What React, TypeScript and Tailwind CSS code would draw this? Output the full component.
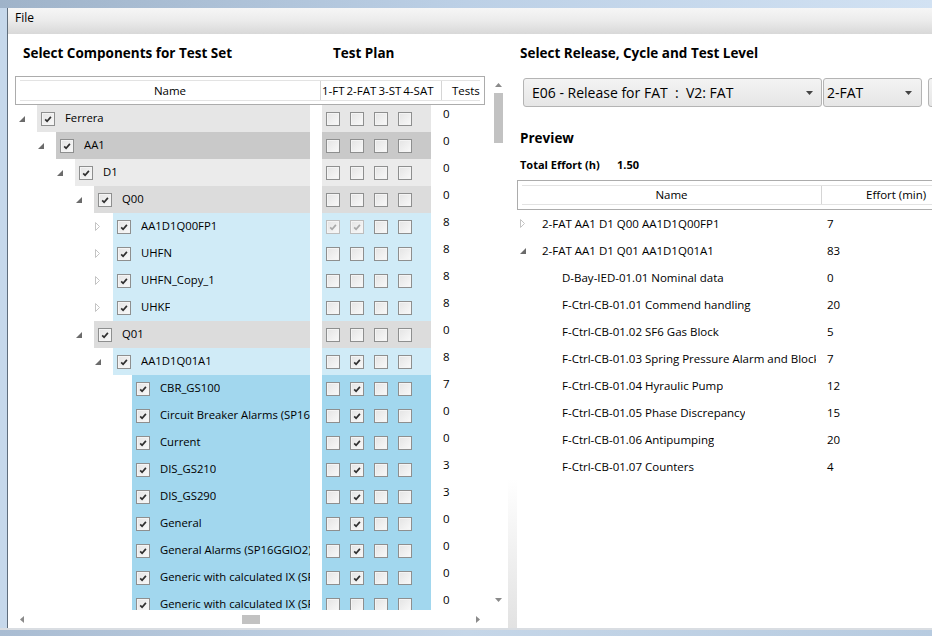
import React from 'react';

type Tone = 'root' | 'area' | 'bay' | 'ied' | 'dev' | 'fn';

const toneBg: Record<Tone, string> = {
  root: 'bg-[#e6e6e6]',
  area: 'bg-[#c9c9c9]',
  bay: 'bg-[#ebebeb]',
  ied: 'bg-[#dcdcdc]',
  dev: 'bg-[#d0ebf7]',
  fn: 'bg-[#a2d7ee]',
};

interface TreeRow {
  name: string;
  level: number;
  exp?: 'open' | 'closed';
  tone: Tone;
  plan: number[]; // 0 off, 1 on, 2 on + disabled
  tests: number;
}

const tree: TreeRow[] = [
  { name: 'Ferrera', level: 0, exp: 'open', tone: 'root', plan: [0, 0, 0, 0], tests: 0 },
  { name: 'AA1', level: 1, exp: 'open', tone: 'area', plan: [0, 0, 0, 0], tests: 0 },
  { name: 'D1', level: 2, exp: 'open', tone: 'bay', plan: [0, 0, 0, 0], tests: 0 },
  { name: 'Q00', level: 3, exp: 'open', tone: 'ied', plan: [0, 0, 0, 0], tests: 0 },
  { name: 'AA1D1Q00FP1', level: 4, exp: 'closed', tone: 'dev', plan: [2, 2, 0, 0], tests: 8 },
  { name: 'UHFN', level: 4, exp: 'closed', tone: 'dev', plan: [0, 0, 0, 0], tests: 8 },
  { name: 'UHFN_Copy_1', level: 4, exp: 'closed', tone: 'dev', plan: [0, 0, 0, 0], tests: 8 },
  { name: 'UHKF', level: 4, exp: 'closed', tone: 'dev', plan: [0, 0, 0, 0], tests: 8 },
  { name: 'Q01', level: 3, exp: 'open', tone: 'ied', plan: [0, 0, 0, 0], tests: 0 },
  { name: 'AA1D1Q01A1', level: 4, exp: 'open', tone: 'dev', plan: [0, 1, 0, 0], tests: 8 },
  { name: 'CBR_GS100', level: 5, tone: 'fn', plan: [0, 1, 0, 0], tests: 7 },
  { name: 'Circuit Breaker Alarms (SP16GGIO1)', level: 5, tone: 'fn', plan: [0, 1, 0, 0], tests: 0 },
  { name: 'Current', level: 5, tone: 'fn', plan: [0, 1, 0, 0], tests: 0 },
  { name: 'DIS_GS210', level: 5, tone: 'fn', plan: [0, 1, 0, 0], tests: 3 },
  { name: 'DIS_GS290', level: 5, tone: 'fn', plan: [0, 1, 0, 0], tests: 3 },
  { name: 'General', level: 5, tone: 'fn', plan: [0, 1, 0, 0], tests: 0 },
  { name: 'General Alarms (SP16GGIO2)', level: 5, tone: 'fn', plan: [0, 1, 0, 0], tests: 0 },
  { name: 'Generic with calculated IX (SP16GGIO3)', level: 5, tone: 'fn', plan: [0, 1, 0, 0], tests: 0 },
  { name: 'Generic with calculated IX (SP16GGIO4)', level: 5, tone: 'fn', plan: [0, 0, 0, 0], tests: 0 },
];

const preview = [
  { name: '2-FAT AA1 D1 Q00 AA1D1Q00FP1', effort: 7, exp: 'closed', child: false },
  { name: '2-FAT AA1 D1 Q01 AA1D1Q01A1', effort: 83, exp: 'open', child: false },
  { name: 'D-Bay-IED-01.01 Nominal data', effort: 0, child: true },
  { name: 'F-Ctrl-CB-01.01 Commend handling', effort: 20, child: true },
  { name: 'F-Ctrl-CB-01.02 SF6 Gas Block', effort: 5, child: true },
  { name: 'F-Ctrl-CB-01.03 Spring Pressure Alarm and Blocking', effort: 7, child: true },
  { name: 'F-Ctrl-CB-01.04 Hyraulic Pump', effort: 12, child: true },
  { name: 'F-Ctrl-CB-01.05 Phase Discrepancy', effort: 15, child: true },
  { name: 'F-Ctrl-CB-01.06 Antipumping', effort: 20, child: true },
  { name: 'F-Ctrl-CB-01.07 Counters', effort: 4, child: true },
];

function CheckBox({ state }: { state: number }) {
  const disabled = state === 2;
  return (
    <span
      className={`flex h-[14px] w-[14px] shrink-0 items-center justify-center border bg-gradient-to-br from-[#e4e4e4] to-[#f9f9f9] shadow-[inset_0_0_0_1px_#f4f4f4] ${
        disabled ? 'border-[#bdbdbd]' : 'border-[#8e8f8f]'
      }`}
    >
      {state > 0 && (
        <svg width="10" height="10" viewBox="0 0 10 10">
          <path
            d="M2.2 5.3 L4.1 7.3 L7.9 2.9"
            fill="none"
            stroke={disabled ? '#a9a9a9' : '#2f2f2f'}
            strokeWidth="1.7"
          />
        </svg>
      )}
    </span>
  );
}

function Expander({ exp }: { exp?: 'open' | 'closed' }) {
  if (exp === 'open') {
    return (
      <svg width="6" height="6" viewBox="0 0 6 6">
        <polygon points="6,0 6,6 0,6" fill="#6b6b6b" />
      </svg>
    );
  }
  if (exp === 'closed') {
    return (
      <svg width="5" height="9" viewBox="0 0 5 9">
        <polygon points="0.5,0.5 4.5,4.5 0.5,8.5" fill="none" stroke="#c4c4c4" strokeWidth="1" />
      </svg>
    );
  }
  return null;
}

function Arrow({ dir }: { dir: 'up' | 'down' | 'left' | 'right' }) {
  const pts = {
    up: '0,4 3.5,0 7,4',
    down: '0,0 7,0 3.5,4',
    left: '4,0 4,7 0,3.5',
    right: '0,0 0,7 4,3.5',
  }[dir];
  const horiz = dir === 'left' || dir === 'right';
  return (
    <svg width={horiz ? 4 : 7} height={horiz ? 7 : 4} viewBox={horiz ? '0 0 4 7' : '0 0 7 4'}>
      <polygon points={pts} fill="#8a8a8a" />
    </svg>
  );
}

function ComboBox({ label, width, last }: { label: string; width: string; last?: boolean }) {
  return (
    <div
      className={`flex h-[29px] shrink-0 items-center justify-between rounded-[3px] border border-[#b4b4b4] bg-gradient-to-b from-[#f3f3f3] to-[#e6e6e6] ${width} ${
        last ? 'pl-[3px] pr-[9px]' : 'pl-[8px] pr-[8px]'
      }`}
    >
      <span className="whitespace-pre text-[14px] leading-none">{label}</span>
      <svg width="7" height="4" viewBox="0 0 7 4">
        <polygon points="0,0 7,0 3.5,4" fill="#444" />
      </svg>
    </div>
  );
}

export default function App() {
  return (
    <div className="flex h-[636px] w-[932px] flex-col overflow-hidden bg-white font-['Open_Sans','Noto_Sans',sans-serif] text-black">
      {/* window frame top */}
      <div className="h-[8px] shrink-0 bg-gradient-to-r from-[#9fb3c9] via-[#bcd0e6] to-[#d2e2f3]" />

      <div className="flex min-h-0 flex-1">
        {/* window frame left */}
        <div className="w-[8px] shrink-0 border-r border-[#5f6d7c] bg-[#c6d8eb]" />

        <div className="flex min-w-0 flex-1 flex-col">
          {/* menu */}
          <div className="flex h-[26px] shrink-0 items-center bg-gradient-to-b from-[#f6f6f6] via-[#ebebeb] to-[#d8d8d8] pb-[6px] pl-[7px] text-[12px]">
            File
          </div>

          <div className="flex min-h-0 flex-1">
            {/* left panel */}
            <div className="flex w-[500px] shrink-0 flex-col">
              <div className="flex h-[42px] shrink-0 items-start pt-[10px] text-[13.5px] font-bold leading-[18px]">
                <span className="w-[325px] pl-[15px]">Select Components for Test Set</span>
                <span>Test Plan</span>
              </div>

              <div className="flex min-h-0 flex-1">
                <div className="ml-[7px] flex w-[470px] flex-col">
                  {/* header */}
                  <div className="shrink-0 border border-[#acacac] px-[4px] py-[3px]">
                    <div className="flex h-[21px] items-center border-y border-[#e3e3e3] text-[11.5px]">
                      <div className="flex h-full w-[301px] items-center justify-center border-r border-[#d5d5d5]">Name</div>
                      <div className="flex h-full w-[121px] items-center gap-[2px] overflow-hidden whitespace-nowrap border-r border-[#d5d5d5] pl-[1px]">
                        <span>1-FT</span>
                        <span>2-FAT</span>
                        <span>3-ST</span>
                        <span>4-SAT</span>
                      </div>
                      <div className="pl-[10px]">Tests</div>
                    </div>
                  </div>

                  {/* tree */}
                  <div className="min-h-0 flex-1 overflow-hidden">
                    {tree.map((r) => (
                      <div key={r.name} className="flex h-[27px]">
                        <div className="flex w-[307px] shrink-0">
                          <div className="shrink-0" style={{ width: r.level * 19 }} />
                          <div className="flex w-[22px] shrink-0 items-center pl-[4px]">
                            <Expander exp={r.exp} />
                          </div>
                          <div className={`mr-[12px] flex min-w-0 flex-1 items-center overflow-hidden pl-[4px] ${toneBg[r.tone]}`}>
                            <CheckBox state={1} />
                            <span className="ml-[10px] min-w-0 overflow-hidden whitespace-nowrap text-[11.3px]">{r.name}</span>
                          </div>
                        </div>
                        <div className={`flex w-[109px] shrink-0 items-center gap-[10px] pl-[4px] ${toneBg[r.tone]}`}>
                          {r.plan.map((p, i) => (
                            <CheckBox key={i} state={p} />
                          ))}
                        </div>
                        <div className="pl-[12px] pt-[1px] text-[11.5px] leading-[16px]">{r.tests}</div>
                      </div>
                    ))}
                  </div>
                </div>

                {/* vertical scrollbar */}
                <div className="ml-[7px] flex w-[12px] flex-col items-center pb-[8px] pt-[7px]">
                  <Arrow dir="up" />
                  <div className="mt-[6px] h-[50px] w-[9px] bg-[#c2c2c2]" />
                  <div className="flex-1" />
                  <Arrow dir="down" />
                </div>
              </div>

              {/* horizontal scrollbar */}
              <div className="ml-[7px] flex h-[18px] w-[470px] shrink-0 items-center pl-[5px] pr-[5px]">
                <Arrow dir="left" />
                <div className="ml-[218px] h-[9px] w-[18px] bg-[#c2c2c2]" />
                <div className="flex-1" />
                <Arrow dir="right" />
              </div>
            </div>

            {/* splitter */}
            <div className="w-[9px] shrink-0 bg-gradient-to-b from-white from-[75%] to-[#e2e2e2]" />

            {/* right panel */}
            <div className="flex min-w-0 flex-1 flex-col overflow-hidden">
              <div className="h-[42px] shrink-0 pl-[3px] pt-[10px] text-[13.5px] font-bold leading-[18px]">
                Select Release, Cycle and Test Level
              </div>

              <div className="mt-[2px] flex shrink-0 pl-[6px]">
                <ComboBox label="E06 - Release for FAT  :  V2: FAT" width="w-[299px]" />
                <div className="ml-[1px]">
                  <ComboBox label="2-FAT" width="w-[99px]" last />
                </div>
                <div className="ml-[6px]">
                  <ComboBox label="" width="w-[100px]" />
                </div>
              </div>

              <div className="mt-[22px] pl-[3px] text-[13.5px] font-bold leading-[18px]">Preview</div>
              <div className="mt-[10px] flex pl-[3px] text-[11px] font-bold leading-[16px]">
                <span className="w-[97px]">Total Effort (h)</span>
                <span>1.50</span>
              </div>

              {/* preview table */}
              <div className="mt-[7px] w-[440px] shrink-0 border border-[#acacac] px-[4px] py-[4px]">
                <div className="flex h-[20px] items-center border-y border-[#e3e3e3] text-[11.5px]">
                  <div className="flex h-full w-[300px] items-center justify-center border-r border-[#d5d5d5]">Name</div>
                  <div className="whitespace-nowrap pl-[44px]">Effort (min)</div>
                </div>
              </div>

              <div>
                {preview.map((p) => (
                  <div key={p.name} className="flex h-[27px] items-center text-[11.5px]">
                    <div className="flex w-[299px] shrink-0 items-center overflow-hidden">
                      <div className="flex w-[25px] shrink-0 items-center pl-[3px]">
                        <Expander exp={p.exp as 'open' | 'closed' | undefined} />
                      </div>
                      {p.child && <div className="w-[20px] shrink-0" />}
                      <span className="min-w-0 overflow-hidden whitespace-nowrap">{p.name}</span>
                    </div>
                    <div className="pl-[11px]">{p.effort}</div>
                  </div>
                ))}
              </div>
            </div>
          </div>
        </div>
      </div>

      {/* window frame bottom */}
      <div className="h-[8px] shrink-0 border-t-2 border-[#d9dde2] bg-gradient-to-r from-[#a9bcd2] via-[#c5d6e8] to-[#b7cbe0]" />
    </div>
  );
}
